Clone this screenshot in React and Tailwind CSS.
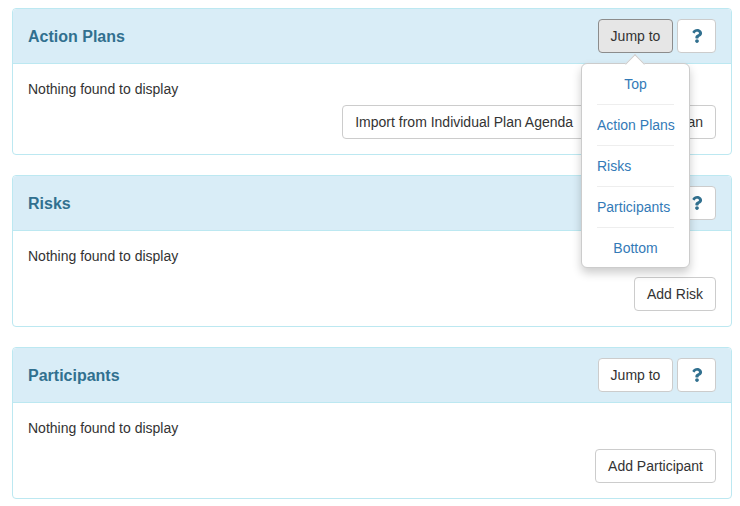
import { FaQuestion } from "react-icons/fa";

const btn =
  "h-[34px] px-3 flex items-center rounded border text-sm text-[#333333] whitespace-nowrap";
const plain = "border-[#cccccc] bg-white";

const JumpMenu = () => {
  const items = [
    ["Top", "text-center"],
    ["Action Plans", "text-left"],
    ["Risks", "text-left"],
    ["Participants", "text-left"],
    ["Bottom", "text-center"],
  ];

  return (
    <div className="absolute right-[41px] top-[54px] z-10 w-[109px] h-[205px] px-[15px] rounded-md border border-[#cccccc] bg-white shadow-[0_5px_10px_rgba(0,0,0,0.2)]">
      <div className="absolute left-[46px] -top-[7px] w-[14px] h-[14px] rotate-45 bg-white border-l border-t border-[#cccccc]" />
      {items.map(([label, align], i) => (
        <div
          key={label}
          className={`relative h-[41px] leading-[40px] text-sm text-[#337ab7] whitespace-nowrap ${align} ${
            i < 4 ? "border-b border-[#eeeeee]" : ""
          }`}
        >
          {label}
        </div>
      ))}
    </div>
  );
};

const Panel = ({ title, open, actions, gap, className }) => (
  <section
    className={`relative rounded border border-[#bce8f1] bg-white ${className}`}
  >
    <header className="h-[55px] px-[15px] flex items-center justify-between rounded-t border-b border-[#bce8f1] bg-[#d9edf7]">
      <h3 className="pt-0.5 text-base font-bold text-[#31708f]">{title}</h3>
      <div className="flex gap-1">
        <button
          className={`${btn} w-[75px] justify-center ${
            open ? "bg-[#e6e6e6] border-[#8c8c8c]" : plain
          }`}
        >
          Jump to
        </button>
        <button className={`${btn} ${plain} w-[39px] justify-center`}>
          <FaQuestion className="ml-px w-[14px] h-[14px] text-[#31708f]" />
        </button>
      </div>
    </header>
    {open && <JumpMenu />}
    <div className="px-[15px] pt-[15px]">
      <p className="text-sm leading-5 text-[#333333]">Nothing found to display</p>
      <div className={`flex justify-end gap-[5px] ${gap}`}>{actions}</div>
    </div>
  </section>
);

export default function App() {
  return (
    <div className="w-[740px] h-[506px] overflow-hidden bg-white pl-3 pr-2 pt-2 flex flex-col gap-5 font-['Liberation_Sans',Arial,sans-serif]">
      <Panel
        title="Action Plans"
        open
        gap="mt-1.5"
        className="h-[147px]"
        actions={
          <>
            <button className={`${btn} ${plain}`}>Import from Individual Plan Agenda</button>
            <button className={`${btn} ${plain}`}>Add Action Plan</button>
          </>
        }
      />
      <Panel
        title="Risks"
        gap="mt-[11px]"
        className="h-[152px]"
        actions={<button className={`${btn} ${plain}`}>Add Risk</button>}
      />
      <Panel
        title="Participants"
        gap="mt-[11px]"
        className="h-[152px]"
        actions={<button className={`${btn} ${plain}`}>Add Participant</button>}
      />
    </div>
  );
}
